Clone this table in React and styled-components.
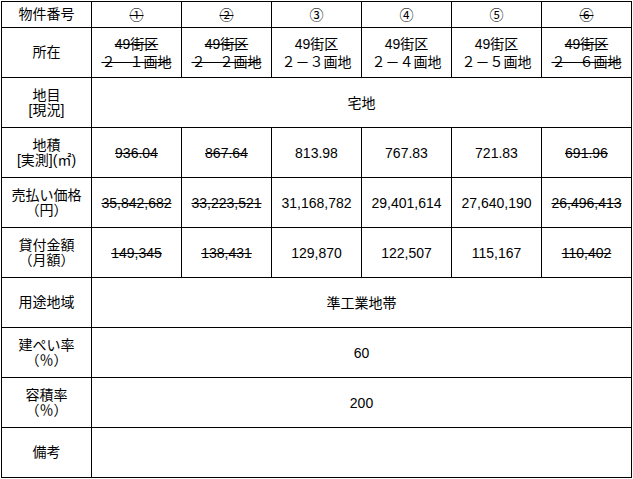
import React from "react";
import styled, { createGlobalStyle } from "styled-components";

const Global = createGlobalStyle`
  html, body { margin: 0; padding: 0; background: #fff; }
  body {
    font-family: "Liberation Sans", "Noto Sans CJK JP", sans-serif;
    color: #000;
  }
`;

const Page = styled.div`
  padding: 1px 0 0 1px;
`;

const Table = styled.div`
  display: grid;
  grid-template-columns: repeat(7, 89px);
  grid-template-rows: 25px repeat(9, 49px);
  gap: 1px;
  padding: 1px;
  background: #000;
  width: max-content;
`;

const Cell = styled.div`
  background: #fff;
  display: flex;
  flex-direction: column;
  align-items: center;
  justify-content: center;
  text-align: center;
  font-size: 14px;
  line-height: ${(p) => (p.$label ? "15px" : "18px")};
  grid-column: ${(p) => (p.$span ? "2 / -1" : "auto")};
  white-space: nowrap;
`;

const Line = styled.span`
  display: block;
  text-decoration: ${(p) => (p.$struck ? "line-through" : "none")};
  text-decoration-thickness: 1px;
`;

const struck = [true, true, false, false, false, true];
const nums = ["①", "②", "③", "④", "⑤", "⑥"];
const area = ["936.04", "867.64", "813.98", "767.83", "721.83", "691.96"];
const price = [
  "35,842,682",
  "33,223,521",
  "31,168,782",
  "29,401,614",
  "27,640,190",
  "26,496,413",
];
const rent = ["149,345", "138,431", "129,870", "122,507", "115,167", "110,402"];
const block = ["１", "２", "３", "４", "５", "６"];

const Label = ({ lines }) => (
  <Cell $label>
    {lines.map((l, i) => (
      <Line key={i}>{l}</Line>
    ))}
  </Cell>
);

const ValueRow = ({ values }) =>
  values.map((v, i) => (
    <Cell key={i}>
      <Line $struck={struck[i]}>{v}</Line>
    </Cell>
  ));

export default function App() {
  return (
    <Page>
      <Global />
      <Table>
        <Label lines={["物件番号"]} />
        <ValueRow values={nums} />

        <Label lines={["所在"]} />
        {block.map((b, i) => (
          <Cell key={i}>
            <Line $struck={struck[i]}>49街区</Line>
            <Line $struck={struck[i]}>{`２－${b}画地`}</Line>
          </Cell>
        ))}

        <Label lines={["地目", "[現況]"]} />
        <Cell $span>宅地</Cell>

        <Label lines={["地積", "[実測](㎡)"]} />
        <ValueRow values={area} />

        <Label lines={["売払い価格", "（円）"]} />
        <ValueRow values={price} />

        <Label lines={["貸付金額", "（月額）"]} />
        <ValueRow values={rent} />

        <Label lines={["用途地域"]} />
        <Cell $span>準工業地帯</Cell>

        <Label lines={["建ぺい率", "（％）"]} />
        <Cell $span>60</Cell>

        <Label lines={["容積率", "（％）"]} />
        <Cell $span>200</Cell>

        <Label lines={["備考"]} />
        <Cell $span />
      </Table>
    </Page>
  );
}
